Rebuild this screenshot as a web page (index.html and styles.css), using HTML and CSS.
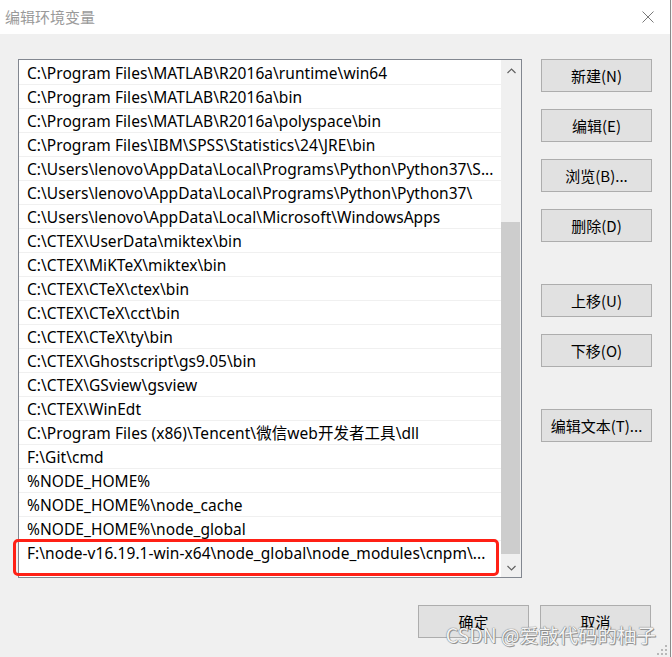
FILE: index.html
```html
<!DOCTYPE html>
<html lang="zh-CN">
<head>
<meta charset="utf-8">
<title>编辑环境变量</title>
<link rel="stylesheet" href="styles.css">
</head>
<body>
<div class="window">
  <div class="titlebar">
    <span class="title">编辑环境变量</span>
    <svg class="close" width="12" height="12" viewBox="0 0 12 12"><path d="M0.5 0.5 L11.5 11.5 M11.5 0.5 L0.5 11.5" stroke="#7a7a7a" stroke-width="1" fill="none"/></svg>
  </div>
  <div class="content">
    <div class="main">
      <div class="listbox">
        <div class="rows">
          <div class="row">C:\Program Files\MATLAB\R2016a\runtime\win64</div>
          <div class="row">C:\Program Files\MATLAB\R2016a\bin</div>
          <div class="row">C:\Program Files\MATLAB\R2016a\polyspace\bin</div>
          <div class="row">C:\Program Files\IBM\SPSS\Statistics\24\JRE\bin</div>
          <div class="row">C:\Users\lenovo\AppData\Local\Programs\Python\Python37\S...</div>
          <div class="row">C:\Users\lenovo\AppData\Local\Programs\Python\Python37\</div>
          <div class="row">C:\Users\lenovo\AppData\Local\Microsoft\WindowsApps</div>
          <div class="row">C:\CTEX\UserData\miktex\bin</div>
          <div class="row">C:\CTEX\MiKTeX\miktex\bin</div>
          <div class="row">C:\CTEX\CTeX\ctex\bin</div>
          <div class="row">C:\CTEX\CTeX\cct\bin</div>
          <div class="row">C:\CTEX\CTeX\ty\bin</div>
          <div class="row">C:\CTEX\Ghostscript\gs9.05\bin</div>
          <div class="row">C:\CTEX\GSview\gsview</div>
          <div class="row">C:\CTEX\WinEdt</div>
          <div class="row">C:\Program Files (x86)\Tencent\微信web开发者工具\dll</div>
          <div class="row">F:\Git\cmd</div>
          <div class="row">%NODE_HOME%</div>
          <div class="row">%NODE_HOME%\node_cache</div>
          <div class="row">%NODE_HOME%\node_global</div>
          <div class="row row-edit">F:\node-v16.19.1-win-x64\node_global\node_modules\cnpm\...</div>
        </div>
        <div class="scrollbar">
          <svg class="arrow" width="9" height="6" viewBox="0 0 9 6"><path d="M0.5 5 L4.5 1 L8.5 5" stroke="#606060" stroke-width="1.2" fill="none"/></svg>
          <div class="track"><div class="thumb"></div></div>
          <svg class="arrow" width="9" height="6" viewBox="0 0 9 6"><path d="M0.5 1 L4.5 5 L8.5 1" stroke="#606060" stroke-width="1.2" fill="none"/></svg>
        </div>
      </div>
      <div class="side">
        <button class="btn">新建(N)</button>
        <button class="btn">编辑(E)</button>
        <button class="btn">浏览(B)...</button>
        <button class="btn">删除(D)</button>
        <button class="btn gap-big">上移(U)</button>
        <button class="btn">下移(O)</button>
        <button class="btn gap-big">编辑文本(T)...</button>
      </div>
    </div>
    <div class="footer">
      <button class="btn">确定</button>
      <button class="btn">取消</button>
    </div>
    <div class="watermark">CSDN @爱敲代码的柚子</div>
    <svg class="grip" width="10" height="10" viewBox="0 0 10 10" fill="#b8b8b8">
      <rect x="8" y="0" width="2" height="2"/>
      <rect x="4" y="4" width="2" height="2"/><rect x="8" y="4" width="2" height="2"/>
      <rect x="0" y="8" width="2" height="2"/><rect x="4" y="8" width="2" height="2"/><rect x="8" y="8" width="2" height="2"/>
    </svg>
  </div>
</div>
</body>
</html>
```

FILE: styles.css
```css
* { box-sizing: border-box; }
html, body {
  margin: 0;
  padding: 0;
  background: #f7f7f7;
}
body {
  font-family: "Noto Sans", "Noto Sans CJK SC", sans-serif;
  font-size: 15px;
  color: #000;
}
.window {
  width: 671px;
  height: 657px;
  border-right: 1px solid #8a8a8a;
  background: #f0f0f0;
  display: flex;
  flex-direction: column;
}
.titlebar {
  height: 34px;
  background: #fff;
  display: flex;
  align-items: center;
  justify-content: space-between;
  padding: 0 16px 0 5px;
}
.title {
  color: #9a9a9a;
  font-family: "Noto Sans CJK SC", sans-serif;
  font-size: 15px;
  line-height: 20px;
}
.content {
  flex: 1;
  position: relative;
  padding: 25px 0 0 18px;
}
.main {
  display: flex;
  align-items: flex-start;
}
.listbox {
  width: 504px;
  height: 519px;
  border: 1px solid #828790;
  background: #fff;
  display: flex;
}
.rows {
  flex: 1;
  padding-top: 1px;
}
.row {
  height: 24px;
  line-height: 25px;
  border-bottom: 1px solid #f0f0f0;
  padding-left: 8px;
  white-space: nowrap;
  font-family: "Noto Sans", "Noto Sans CJK SC", sans-serif;
  font-size: 15.5px;
  letter-spacing: 0.05px;
}
.row-edit {
  position: relative;
  border-bottom: none;
}
.row-edit::after {
  content: "";
  position: absolute;
  left: -6px;
  top: -2px;
  width: 480px;
  height: 31px;
  border: 3px solid #ff2015;
  border-radius: 5px;
}
.scrollbar {
  width: 20px;
  background: #f0f0f0;
  display: flex;
  flex-direction: column;
  align-items: center;
}
.arrow {
  margin: 8px 0 6px;
  flex: none;
}
.track {
  flex: 1;
  width: 100%;
  position: relative;
}
.thumb {
  margin-top: 142px;
  height: 332px;
  width: 19px;
  background: #cdcdcd;
}
.side {
  margin-left: 19px;
  display: flex;
  flex-direction: column;
  gap: 17px;
}
.btn {
  width: 111px;
  height: 33px;
  background: #e1e1e1;
  border: 1px solid #adadad;
  font-family: "Noto Sans CJK SC", sans-serif;
  font-size: 15px;
  color: #000;
  padding: 0;
}
.side .gap-big {
  margin-top: 25px;
}
.footer {
  display: flex;
  justify-content: flex-end;
  gap: 11px;
  padding-right: 19px;
  margin-top: 27px;
}
.watermark {
  position: absolute;
  right: 14px;
  bottom: 8px;
  font-family: "Noto Sans CJK SC", sans-serif;
  font-size: 19.5px;
  color: #f4f4f4;
  text-shadow: 0 0 1px #7a7a7a, 0 0 1px #7a7a7a, 1px 1px 0 #9a9a9a;
  white-space: nowrap;
}
.grip {
  position: absolute;
  right: 3px;
  bottom: 2px;
}
```
